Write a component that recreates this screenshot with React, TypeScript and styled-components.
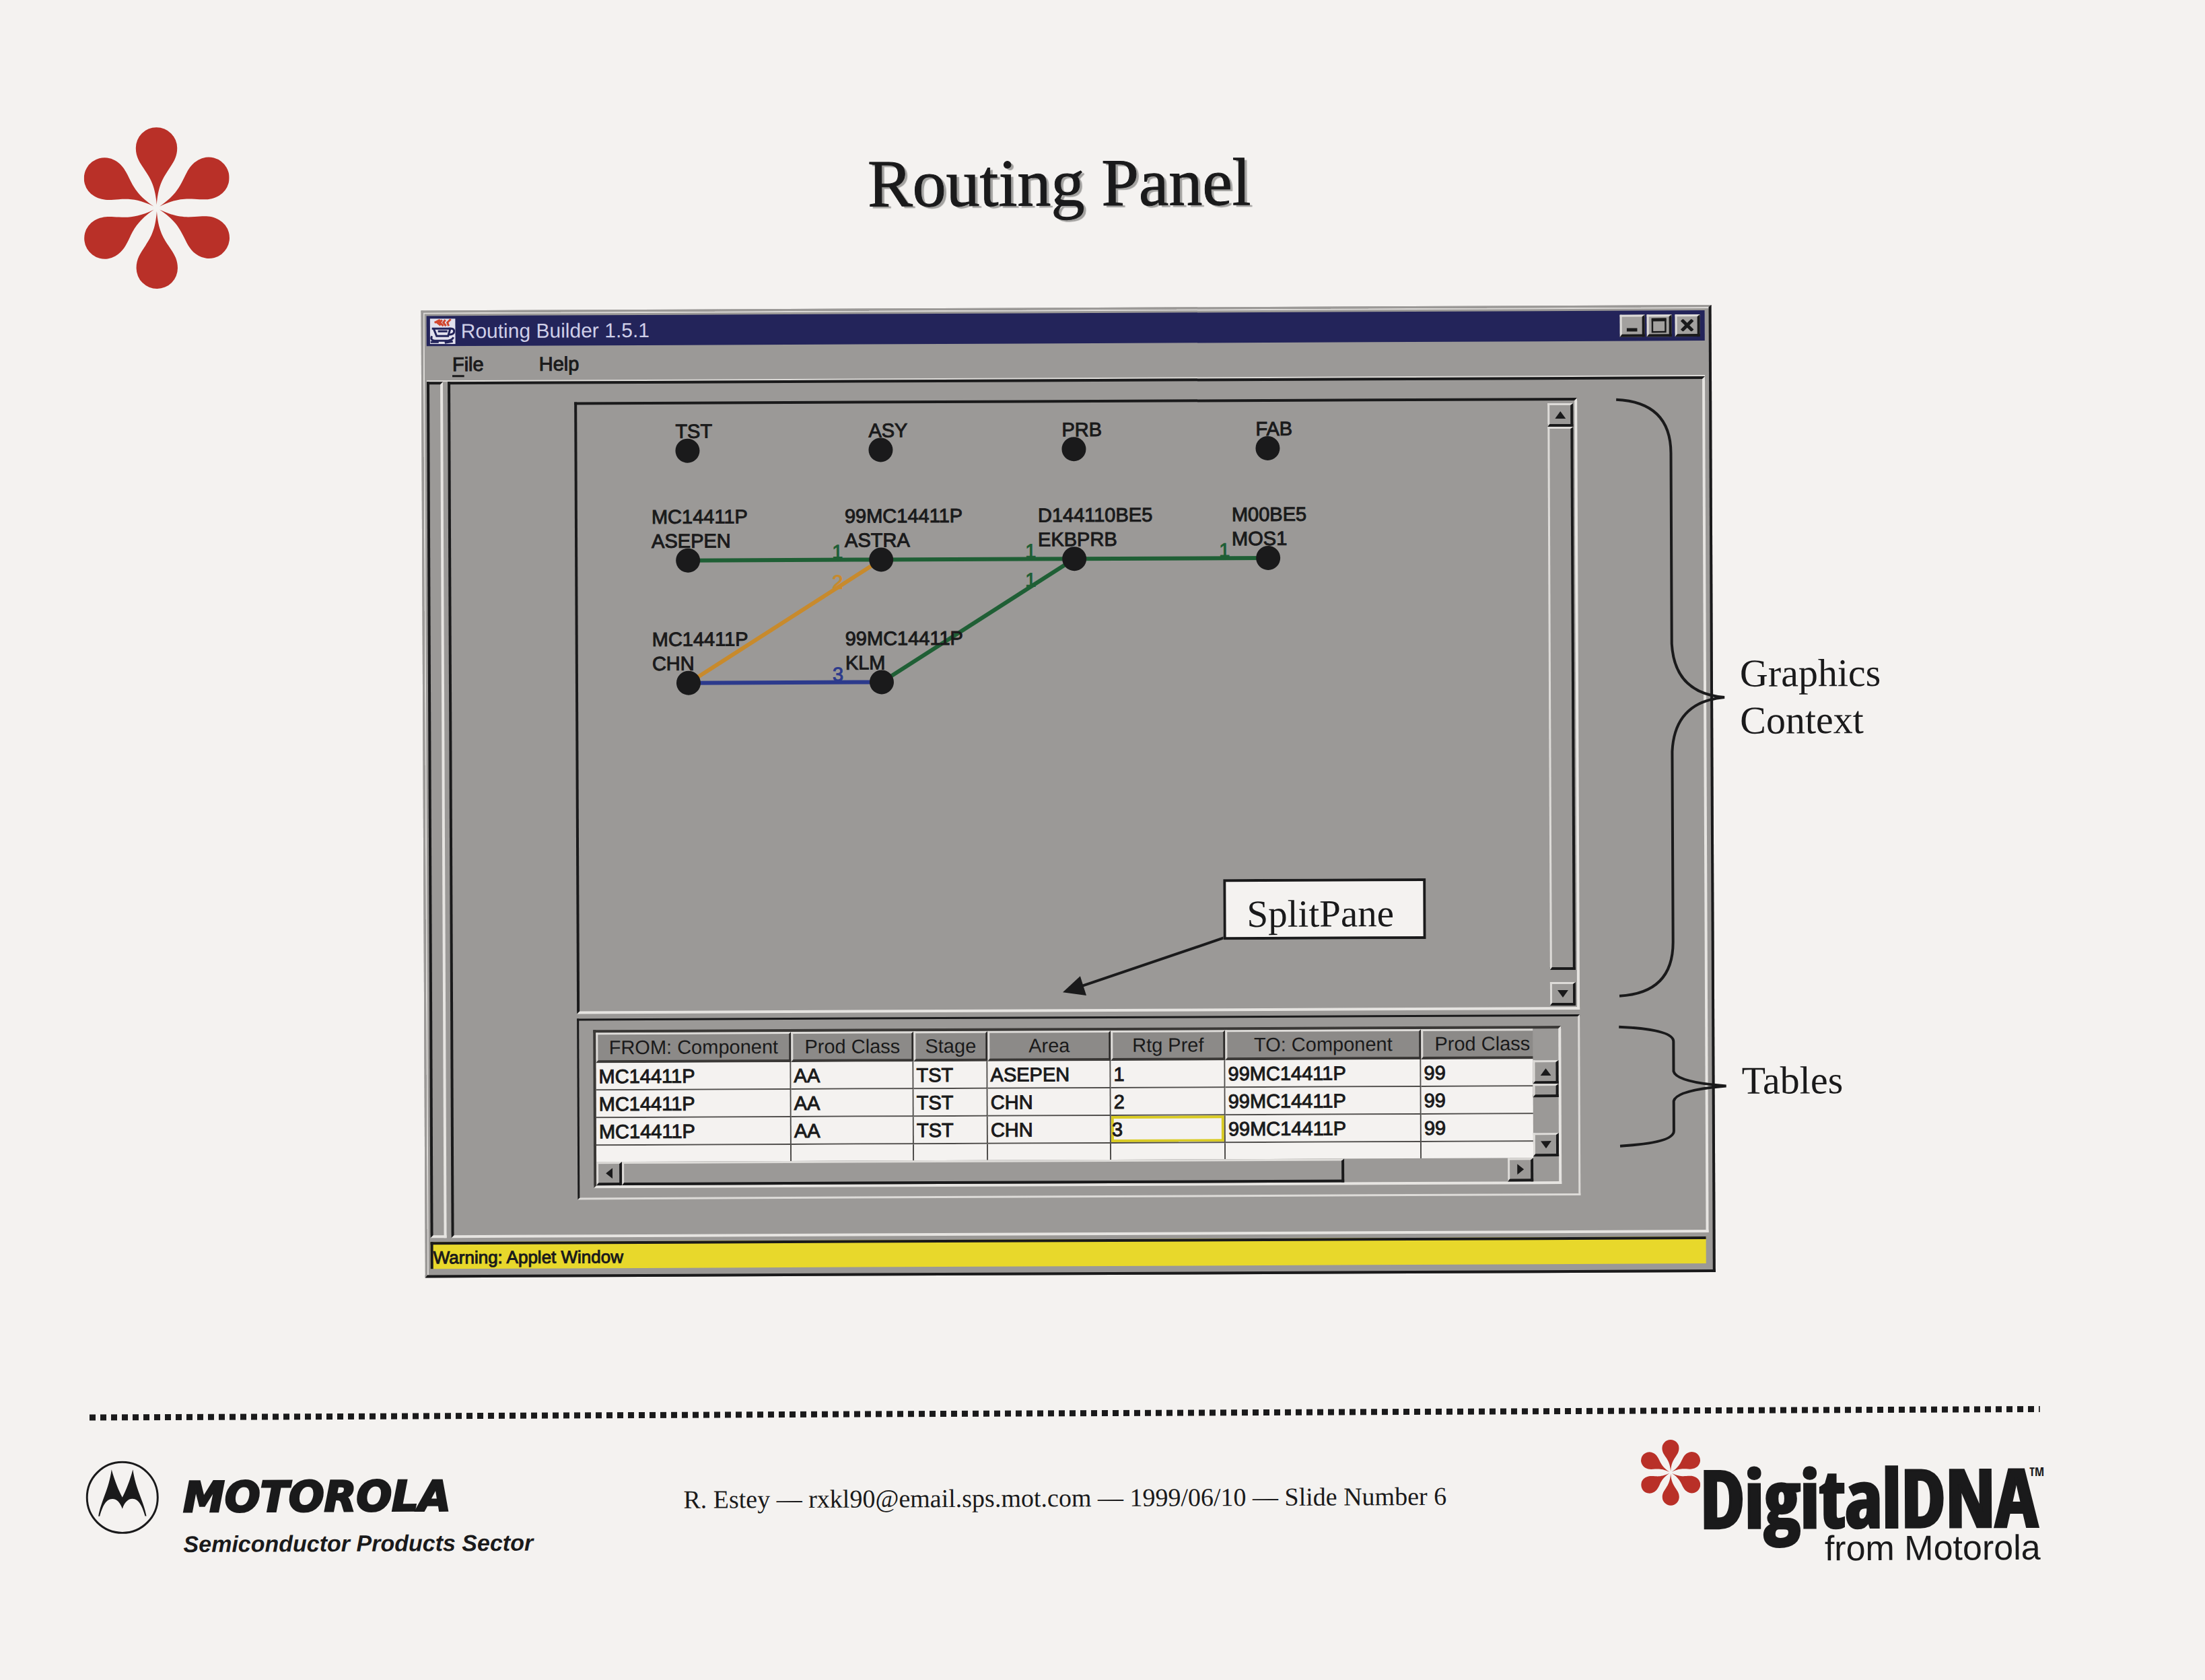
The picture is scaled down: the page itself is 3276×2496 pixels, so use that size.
import React from "react";
import styled, { createGlobalStyle } from "styled-components";

const ink = "#1a1a1b";
const paper = "#f4f2f0";
const grey = "#9b9997";
const light = "#dddbd8";
const navy = "#23245a";
const red = "#b93028";
const green = "#1f5f35";
const orange = "#c88a2c";
const blue = "#2c3a8c";
const sans = '"Liberation Sans", Arial, sans-serif';
const serif = '"Liberation Serif", "Times New Roman", serif';

const Global = createGlobalStyle`
  * { box-sizing: border-box; }
  html { background: ${paper}; overflow: hidden; }
  body { margin: 0; background: ${paper}; color: ${ink}; font-family: ${serif}; overflow: hidden; }
  button { margin: 0; padding: 0; font: inherit; color: inherit; border-radius: 0; }
`;

/* The slide lies slightly turned on the page. */
const Slide = styled.main`
  min-height: 100vh;
  padding: 181px 249px 120px 129px;
  display: flex;
  flex-direction: column;
  transform: rotate(-0.25deg);
`;

const Header = styled.header`
  display: grid;
  grid-template-columns: 1fr auto 1fr;
  align-items: start;
`;

const Title = styled.h1`
  margin: 41px 0 0;
  font-size: 100px;
  line-height: 100px;
  font-weight: 400;
  text-shadow: 4px 3px 1px #a3a2a0;
  -webkit-text-stroke: 1px ${ink};
`;

const Figure = styled.section`
  margin: 32px 0 0 500px;
  display: grid;
  grid-template-columns: minmax(0, 1fr) 481px;
`;

const Win = styled.div`
  border: 3px solid ${grey};
  border-right: 4px solid ${ink};
  border-bottom: 4px solid ${ink};
  padding: 5px 6px 9px 5px;
  background: ${grey};
  box-shadow: inset 2px 2px 0 ${light};
  font-family: ${sans};
  font-size: 29px;
  line-height: 36px;
  -webkit-text-stroke: 1px currentColor;
`;

const TitleBar = styled.div`
  height: 45px;
  padding: 0 7px 0 5px;
  display: flex;
  align-items: center;
  background: ${navy};
  color: #cfcfe8;
  -webkit-text-stroke: 0;
`;

const WinTitle = styled.h2`
  margin: 0 auto 0 8px;
  font-size: 30px;
  font-weight: 400;
`;

const WinButton = styled.button<{ $gap?: number }>`
  width: 37px;
  height: 33px;
  margin-left: ${(p) => p.$gap ?? 0}px;
  display: grid;
  place-items: center;
  background: #a3a19f;
  border: 3px solid ${light};
  border-right: 4px solid ${ink};
  border-bottom: 4px solid ${ink};
`;

const MenuBar = styled.nav`
  height: 51px;
  padding: 2px 0 0 38px;
  display: flex;
  align-items: center;
  gap: 82px;
`;

const MenuItem = styled.button`
  background: none;
  border: 0;
  u { text-underline-offset: 6px; text-decoration-thickness: 3px; }
`;

const Body = styled.div`
  display: flex;
  gap: 7px;
  border-top: 2px solid ${light};
`;

const Sunken = styled.div`
  border: 4px solid ${ink};
  border-right-color: #e6e4e1;
  border-bottom-color: #e6e4e1;
`;

const Strip = styled(Sunken)`
  width: 24px;
`;

const Content = styled(Sunken)`
  flex: 1;
  min-width: 0;
  padding: 27px 186px 52px 184px;
  display: flex;
  flex-direction: column;
  gap: 7px;
`;

const GraphicsPane = styled(Sunken)`
  position: relative;
  display: flex;
`;

const Canvas = styled.svg`
  display: block;
  flex: 1;
  min-width: 0;
  height: 901px;
  text { stroke-width: 1px; }
`;

const Callout = styled.div`
  position: absolute;
  left: 957px;
  top: 709px;
  padding: 16px 43px 2px 31px;
  border: 4px solid ${ink};
  background: ${paper};
  font-family: ${serif};
  font-size: 57px;
  line-height: 64px;
  -webkit-text-stroke: 0;
`;

const VScroll = styled.div`
  width: 38px;
  display: flex;
  flex-direction: column;
`;

const CanvasScroll = styled(VScroll)`
  margin-right: 2px;
  padding: 4px 0 2px;
`;

const ScrollButton = styled.button`
  flex: none;
  width: 38px;
  height: 35px;
  display: grid;
  place-items: center;
  background: ${grey};
  border: 3px solid ${light};
  border-right: 4px solid ${ink};
  border-bottom: 4px solid ${ink};
`;

const Thumb = styled.div<{ $size?: number }>`
  ${(p) => (p.$size ? `flex: 0 0 ${p.$size}px;` : "flex: 1;")}
  background: ${grey};
  border: 3px solid ${light};
  border-right: 4px solid ${ink};
  border-bottom: 4px solid ${ink};
`;

const Gap = styled.div<{ $size?: number }>`
  ${(p) => (p.$size ? `flex: 0 0 ${p.$size}px;` : "flex: 1;")}
`;

const TablePane = styled.div`
  border: 3px solid ${ink};
  border-right-color: ${light};
  border-bottom-color: ${light};
  padding: 14px 25px 14px 21px;
`;

const TableFrame = styled.div`
  display: grid;
  grid-template-columns: minmax(0, 1fr) 38px;
  grid-template-rows: 192px 35px;
  border: 4px solid #3a3836;
  border-right-color: #e6e4e1;
  border-bottom-color: #e6e4e1;
`;

const TableView = styled.div`
  overflow: hidden;
`;

const Table = styled.table`
  width: 1408px;
  table-layout: fixed;
  border-collapse: separate;
  border-spacing: 0;
  th {
    height: 45px;
    padding: 0;
    font-weight: 400;
    background: #8c8a88;
    border-top: 3px solid ${light};
    border-left: 3px solid ${light};
    border-right: 3px solid #2c2a29;
    border-bottom: 4px solid #3a3836;
    -webkit-text-stroke: 0;
  }
  td {
    height: 41px;
    padding: 0 0 0 4px;
    background: ${paper};
    border-right: 2px solid #4e4c4a;
    border-bottom: 2px solid #4e4c4a;
  }
`;

const Selected = styled.td`
  && {
    padding-left: 1px;
    box-shadow: inset 0 0 0 4px #d9cb23;
  }
`;

const TableScroll = styled(VScroll)`
  padding: 47px 0 2px;
`;

const HScroll = styled.div`
  display: flex;
`;

const Status = styled.footer`
  height: 40px;
  margin: 6px 4px 0 0;
  padding-top: 2px;
  border-top: 4px solid ${ink};
  border-left: 4px solid ${ink};
  background: #e8d82b;
  font-size: 26px;
  line-height: 34px;
`;

const Notes = styled.div`
  padding-top: 140px;
  display: flex;
  flex-direction: column;
  gap: 46px;
`;

const Note = styled.div<{ $height: number; $lift?: number }>`
  position: relative;
  height: ${(p) => p.$height}px;
  padding: 0 0 ${(p) => p.$lift ?? 0}px 40px;
  display: flex;
  align-items: center;
  font-size: 58px;
  line-height: 70px;
`;

const BraceSvg = styled.svg`
  position: absolute;
  left: -145px;
  top: 0;
  overflow: visible;
`;

const Rule = styled.hr`
  width: 100%;
  height: 9px;
  margin: 201px 0 0;
  border: 0;
  background: repeating-linear-gradient(90deg, ${ink} 0 9px, transparent 9px 16px);
`;

const Footer = styled.footer`
  display: grid;
  grid-template-columns: 1fr auto 1fr;
  align-items: start;
`;

const Motorola = styled.div`
  margin: 60px 0 0 -6px;
  display: flex;
  gap: 36px;
  font-family: ${sans};
  font-style: italic;
  font-weight: 700;
`;

const MotorolaName = styled.div`
  padding-top: 24px;
  font-family: "DejaVu Sans", sans-serif;
  font-size: 62px;
  line-height: 62px;
  -webkit-text-stroke: 3px ${ink};
`;

const Sector = styled.div`
  margin-top: 18px;
  font-size: 34px;
  line-height: 40px;
  white-space: nowrap;
`;

const Credit = styled.p`
  margin: 97px 0 0;
  font-size: 38px;
  line-height: 48px;
  white-space: nowrap;
`;

const Dna = styled.div`
  justify-self: end;
  margin: 38px -6px 0 0;
  display: flex;
  font-family: ${sans};
`;

const DnaWords = styled.div`
  padding-top: 34px;
  text-align: right;
`;

const DnaName = styled.div`
  display: flex;
  font-family: "Liberation Sans Narrow", "Open Sans Condensed", "Roboto Condensed", ${sans};
  font-size: 118px;
  line-height: 106px;
  font-weight: 700;
  -webkit-text-stroke: 4px ${ink};
  sup { font-size: 18px; line-height: 32px; margin-left: -12px; -webkit-text-stroke: 0; }
`;

const DnaFrom = styled.div`
  padding-right: 6px;
  font-size: 52px;
  line-height: 46px;
`;

const petal =
  "M0-5C2-32 9-44 17-56C25-68 31-76 31-90A31 31 0 0 0-31-90C-31-76-25-68-17-56C-9-44-2-32 0-5Z";

const Flower = ({ width, height }: { width: number; height: number }) => (
  <svg width={width} height={height} viewBox="-109 -122 218 244" fill={red} aria-hidden="true">
    {[0, 60, 120, 180, 240, 300].map((a) => (
      <path key={a} d={petal} transform={`rotate(${a})`} />
    ))}
  </svg>
);

const Java = () => (
  <svg width="38" height="38" viewBox="0 0 38 38" aria-hidden="true">
    <rect width="38" height="38" fill="#e2e1ee" />
    <path d="M7 6l8-4-4 4 5 4M18 2l-3 4 5 5M23 2l-3 4 4 5M31 1l-5 5 2 5" stroke="#d2472f" strokeWidth="3" fill="none" />
    <path d="M3 15h24q9-1 9 4t-8 5M6 16l4 10h17l3-10M12 19h14M3 26q-3 6 4 7h20q6-1 8-5M1 35h12M22 36l12-2" stroke={navy} strokeWidth="3" fill="none" />
  </svg>
);

const arrows = {
  up: "M8 0L16 11H0Z",
  down: "M8 11L0 0H16Z",
  left: "M0 8L10 0V16Z",
  right: "M10 8L0 0V16Z",
};

const Arrow = ({ dir }: { dir: keyof typeof arrows }) => (
  <svg width={dir === "up" || dir === "down" ? 16 : 10} height={dir === "up" || dir === "down" ? 11 : 16} fill={ink} aria-hidden="true">
    <path d={arrows[dir]} />
  </svg>
);

const Brace = ({ height, bend }: { height: number; bend: number }) => {
  const m = height / 2;
  return (
    <BraceSvg width="164" height={height} fill="none" stroke={ink} strokeWidth="4" aria-hidden="true">
      <path
        d={`M3 0Q84 4 84 ${bend}V${m - bend}Q88 ${m - 6} 162 ${m}Q88 ${m + 6} 84 ${m + bend}V${height - bend}Q84 ${height - 4} 4 ${height}`}
      />
    </BraceSvg>
  );
};

const cols = [164, 451, 738, 1026];
const rows = [69, 232, 414];
const stages = ["TST", "ASY", "PRB", "FAB"];
const nodes = [
  { c: 0, r: 1, part: "MC14411P", area: "ASEPEN" },
  { c: 1, r: 1, part: "99MC14411P", area: "ASTRA" },
  { c: 2, r: 1, part: "D144110BE5", area: "EKBPRB" },
  { c: 3, r: 1, part: "M00BE5", area: "MOS1" },
  { c: 0, r: 2, part: "MC14411P", area: "CHN" },
  { c: 1, r: 2, part: "99MC14411P", area: "KLM" },
];
const edges = [
  { from: [0, 1], to: [1, 1], color: green, pref: 1, drop: 0 },
  { from: [1, 1], to: [2, 1], color: green, pref: 1, drop: 0 },
  { from: [2, 1], to: [3, 1], color: green, pref: 1, drop: 0 },
  { from: [0, 2], to: [1, 1], color: orange, pref: 2, drop: 45 },
  { from: [1, 2], to: [2, 1], color: green, pref: 1, drop: 43 },
  { from: [0, 2], to: [1, 2], color: blue, pref: 3, drop: 0 },
];

const headers = ["FROM: Component", "Prod Class", "Stage", "Area", "Rtg Pref", "TO: Component", "Prod Class"];
const widths = [290, 182, 110, 183, 170, 291, 182];
const records = [
  ["MC14411P", "AA", "TST", "ASEPEN", "1", "99MC14411P", "99"],
  ["MC14411P", "AA", "TST", "CHN", "2", "99MC14411P", "99"],
  ["MC14411P", "AA", "TST", "CHN", "3", "99MC14411P", "99"],
  ["", "", "", "", "", "", ""],
];

const Diagram = () => (
  <Canvas role="img" aria-label="Routing diagram">
    {edges.map((e, i) => (
      <g key={i}>
        <line x1={cols[e.from[0]]} y1={rows[e.from[1]]} x2={cols[e.to[0]]} y2={rows[e.to[1]]} stroke={e.color} strokeWidth="6" />
        <text x={cols[e.to[0]] - 73} y={rows[e.to[1]] - 2 + e.drop} fill={e.color} stroke={e.color}>
          {e.pref}
        </text>
      </g>
    ))}
    {stages.map((s, i) => (
      <g key={s} fill={ink}>
        <text x={cols[i] - 18} y={rows[0] - 19} stroke={ink}>{s}</text>
        <circle cx={cols[i]} cy={rows[0]} r="18" />
      </g>
    ))}
    {nodes.map((n, i) => (
      <g key={i} fill={ink}>
        <text x={cols[n.c] - 54} y={rows[n.r] - 55} stroke={ink}>{n.part}</text>
        <text x={cols[n.c] - 54} y={rows[n.r] - 19} stroke={ink}>{n.area}</text>
        <circle cx={cols[n.c]} cy={rows[n.r]} r="18" />
      </g>
    ))}
    <path d="M958 796L740 869" stroke={ink} strokeWidth="4" />
    <path d="M718 876L744 852L753 881Z" fill={ink} />
  </Canvas>
);

export default function App() {
  return (
    <>
      <Global />
      <Slide>
        <Header>
          <Flower width={216} height={244} />
          <Title>Routing Panel</Title>
        </Header>

        <Figure>
          <Win>
            <TitleBar>
              <Java />
              <WinTitle>Routing Builder 1.5.1</WinTitle>
              <WinButton aria-label="Minimize">
                <svg width="16" height="20"><rect y="14" width="16" height="5" fill={ink} /></svg>
              </WinButton>
              <WinButton $gap={3} aria-label="Maximize">
                <svg width="22" height="22"><path d="M1 2H21V21H1Z" fill="none" stroke={ink} strokeWidth="3" /><rect width="22" height="5" fill={ink} /></svg>
              </WinButton>
              <WinButton $gap={5} aria-label="Close">
                <svg width="20" height="18"><path d="M2 1L18 17M18 1L2 17" stroke={ink} strokeWidth="5" /></svg>
              </WinButton>
            </TitleBar>
            <MenuBar>
              <MenuItem><u>F</u>ile</MenuItem>
              <MenuItem>Help</MenuItem>
            </MenuBar>
            <Body>
              <Strip />
              <Content>
                <GraphicsPane>
                  <Diagram />
                  <CanvasScroll>
                    <ScrollButton aria-label="Scroll up"><Arrow dir="up" /></ScrollButton>
                    <Thumb />
                    <Gap $size={18} />
                    <ScrollButton aria-label="Scroll down"><Arrow dir="down" /></ScrollButton>
                  </CanvasScroll>
                  <Callout>SplitPane</Callout>
                </GraphicsPane>
                <TablePane>
                  <TableFrame>
                    <TableView>
                      <Table>
                        <colgroup>
                          {widths.map((w, i) => <col key={i} style={{ width: w }} />)}
                        </colgroup>
                        <thead>
                          <tr>{headers.map((h, i) => <th key={i} scope="col">{h}</th>)}</tr>
                        </thead>
                        <tbody>
                          {records.map((rec, r) => (
                            <tr key={r}>
                              {rec.map((v, c) => (r === 2 && c === 4 ? <Selected key={c}>{v}</Selected> : <td key={c}>{v}</td>))}
                            </tr>
                          ))}
                        </tbody>
                      </Table>
                    </TableView>
                    <TableScroll>
                      <ScrollButton aria-label="Scroll rows up"><Arrow dir="up" /></ScrollButton>
                      <Thumb $size={20} />
                      <Gap />
                      <ScrollButton aria-label="Scroll rows down"><Arrow dir="down" /></ScrollButton>
                    </TableScroll>
                    <HScroll>
                      <ScrollButton aria-label="Scroll left"><Arrow dir="left" /></ScrollButton>
                      <Thumb $size={1073} />
                      <Gap />
                      <ScrollButton aria-label="Scroll right"><Arrow dir="right" /></ScrollButton>
                    </HScroll>
                  </TableFrame>
                </TablePane>
              </Content>
            </Body>
            <Status>Warning: Applet Window</Status>
          </Win>

          <Notes>
            <Note $height={886}>
              <Brace height={886} bend={80} />
              <span>Graphics<br />Context</span>
            </Note>
            <Note $height={177} $lift={16}>
              <Brace height={177} bend={22} />
              <span>Tables</span>
            </Note>
          </Notes>
        </Figure>

        <Rule />
        <Footer>
          <Motorola>
            <svg width="109" height="109" viewBox="-55 -55 110 110" aria-hidden="true">
              <circle r="53" fill="none" stroke={ink} strokeWidth="3" />
              <path d="M-36 28C-32 5-20-12-16-42C-11-24-6-12 0 0C6-12 11-24 16-42C20-12 32 5 36 28L34 28C30 14 25 2 15 2C8 2 3 8 0 17C-3 8-8 2-15 2C-25 2-30 14-34 28Z" fill={ink} />
            </svg>
            <div>
              <MotorolaName>MOTOROLA</MotorolaName>
              <Sector>Semiconductor Products Sector</Sector>
            </div>
          </Motorola>
          <Credit>R. Estey — rxkl90@email.sps.mot.com — 1999/06/10 — Slide Number 6</Credit>
          <Dna>
            <Flower width={88} height={99} />
            <DnaWords>
              <DnaName>DigitalDNA<sup>TM</sup></DnaName>
              <DnaFrom>from Motorola</DnaFrom>
            </DnaWords>
          </Dna>
        </Footer>
      </Slide>
    </>
  );
}
